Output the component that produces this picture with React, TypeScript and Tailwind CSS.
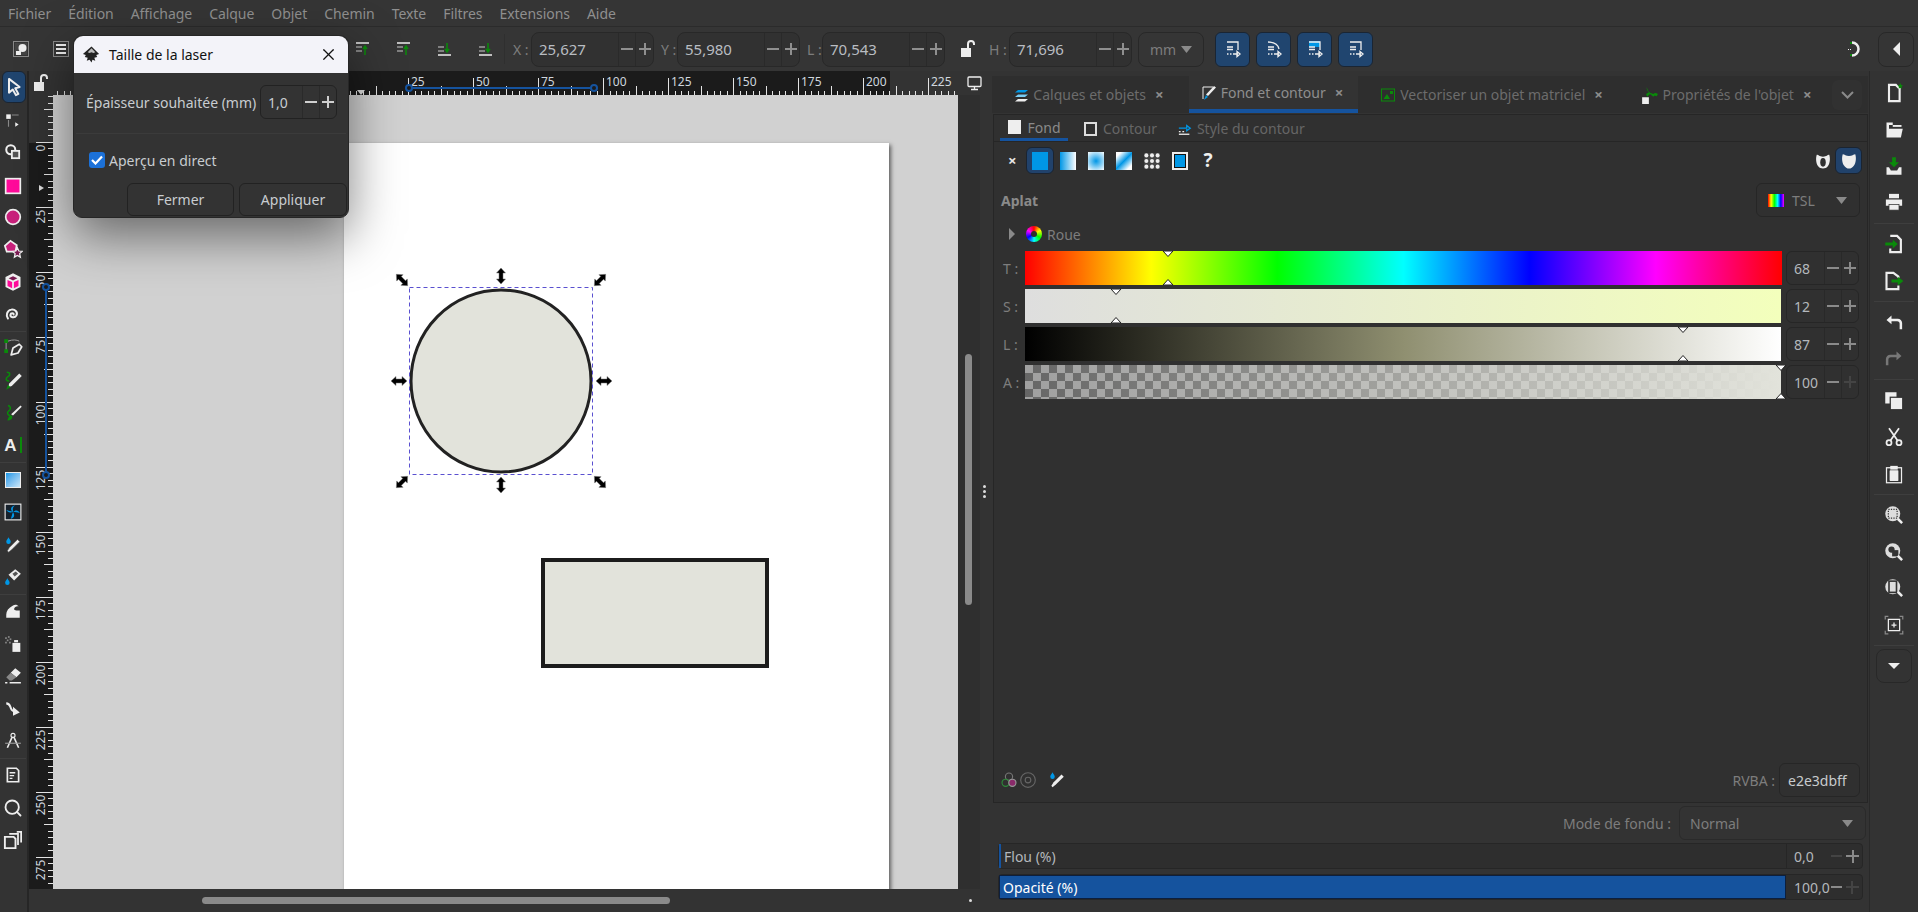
import React from 'react';
import { Search, X } from 'lucide-react';

const W = '#eeeeee';
const G = '#0a8a0a';
const B = '#0097e6';
const P = '#c8217b';

type IconProps = { children: React.ReactNode; size?: number; box?: number };

function Ic({ children, size = 18, box = 16 }: IconProps) {
  return (
    <svg width={size} height={size} viewBox={`0 0 ${box} ${box}`} fill="none">
      {children}
    </svg>
  );
}

// ---- toolbox drawings
const ToolIcons: { node: React.ReactNode; h?: 'sep' }[] = [
  { node: <Ic size={20}><path d="M4 1.500 12.500 8 9 9l2.500 4.500-2 1L7 10l-3 2.500z" stroke={W} strokeWidth="1.600" strokeLinejoin="round" fill="#20456f" /></Ic> },
  { node: <Ic size={18}><rect x="2" y="3" width="4" height="4" fill={W} /><path d="M7 3.500h6M4 8v6" stroke="#888" /><path d="m10 10 3 2-3 2z" fill={W} /></Ic> },
  { node: <Ic size={18}><circle cx="6" cy="6" r="4" stroke={W} strokeWidth="1.800" /><rect x="7" y="7" width="6.500" height="6.500" stroke={W} strokeWidth="1.600" fill="#555" /></Ic> },
  { node: <div className="pt-[3px]"><Ic size={18}><rect x="1.500" y="1.500" width="13" height="13" fill="#ff0a9a" stroke={W} strokeWidth="1.500" /></Ic></div> },
  { node: <Ic size={18}><circle cx="8" cy="8" r="6.500" fill={P} stroke={W} strokeWidth="1.500" /></Ic> },
  { node: <Ic size={20}><path d="M6 1.500 11 5l-1 5H3L1.500 5.500z" fill={P} stroke={W} strokeWidth="1.400" /><path d="m11.500 7 1.200 2.600 2.600.3-2 1.800.6 2.800-2.400-1.400-2.400 1.400.6-2.800-2-1.800 2.600-.3z" fill="#7a1a52" stroke={W} /></Ic> },
  { node: <Ic size={20}><path d="M8 1 14 4v8l-6 3-6-3V4z" fill={W} /><path d="M4.500 5 8 3.300 11.500 5 8 6.800z" fill="#7a1a52" /><path d="M3.600 6.300 7.300 8v5L3.600 11.200zM12.400 6.300 8.700 8v5l3.700-1.800z" fill="#ff0a9a" /></Ic> },
  { node: <Ic size={18}><path d="M8.500 8.500c.5-1.500-2.500-1.800-2.800.2-.3 2.200 3.600 3.400 5.300.6 1.700-3-1.600-6-4.600-5.200C2.500 5 1.500 9.500 3.500 12" stroke={W} strokeWidth="1.800" strokeLinecap="round" /></Ic> },
  { node: null, h: 'sep' },
  { node: <Ic size={20}><rect x="1" y="1" width="3" height="3" fill={G} /><rect x="1" y="9" width="3" height="3" fill={G} /><path d="M2.500 4v5M4 2.500c4-1.500 7-1 9 0" stroke="#999" strokeWidth=".8" /><path d="m13 5-5 3-1.500 5.500 5.500-1.500 3-5z" stroke={W} strokeWidth="1.400" strokeLinejoin="round" /></Ic> },
  { node: <Ic size={20}><path d="M3 1c3 0 3 2.500 1 3.500S2 8 5 8" stroke={G} strokeWidth="1.300" /><path d="m13 2 2 2-8 8-3 1 1-3z" fill={W} /><path d="M4 11 2.500 15 6 13z" fill={G} /></Ic> },
  { node: <Ic size={20}><path d="M4 2c3 1 2 3.500.5 4.500S3.500 10 6 10" stroke={G} strokeWidth="1.200" /><path d="m14 2 1 1-7 7-1.500-1z" fill={W} /><path d="M7 10c-2 0-3 1.500-3.500 4 2.500 0 4-1 4-3z" fill={G} /></Ic> },
  { node: <div className="flex items-center gap-[3px]"><span className="text-[17px] font-bold text-[#eeeeee] leading-none [font-family:'Liberation_Sans',sans-serif]">A</span><span className="w-[2px] h-[16px] bg-[#0a8a0a]" /></div> },
  { node: null, h: 'sep' },
  { node: <div className="w-[16px] h-[16px] border border-[#eeeeee] bg-gradient-to-br from-[#0097e6] to-[#c8e6f8]" /> },
  { node: <Ic size={18}><rect x="1" y="1" width="14" height="14" fill="#16212c" stroke={W} /><path d="M8 8C5 6 6 3 10 2 7 4 8 6 8 8c2-2 5-2 6 1-2-1-4-1-6-1 2 3 1 5-2 6 1-2 1-4 2-6-3 1-5 0-6-2 2 1 4 1 6 2" fill={B} /></Ic> },
  { node: <Ic size={18}><path d="M4 1c1 2 2 2.500 2 4a2 2 0 0 1-4 0c0-1.500 1-2 2-4z" fill={B} /><path d="m12 3 2 2-7 7-3 2.500L3 13l2-3z" fill={W} stroke="#555" strokeWidth=".5" /></Ic> },
  { node: <Ic size={18}><path d="M3 9c1 2 2 2.500 2 4a2 2 0 0 1-4 0c0-1.500 1-2 2-4z" fill={B} /><path d="m10 1 5 4-6 6-5-5z" fill={W} /><path d="m7.500 5 3-2 2 2-3 2.500z" fill="#555" /></Ic> },
  { node: null, h: 'sep' },
  { node: <Ic size={18}><path d="M2 14v-3c0-3 2-6 6-8 2-1 4-.5 5 1-2-.5-3.500.5-4 2-.3 1 1 1.500 2 1.500h3V14z" fill={W} /></Ic> },
  { node: <Ic size={18}><rect x="7.500" y="7" width="7" height="8" fill={W} /><rect x="9" y="4.500" width="3.500" height="2" fill={W} /><g fill="#888"><rect x="1" y="2" width="1.500" height="1.500" /><rect x="3.500" y="1" width="1.500" height="1.500" /><rect x="2.500" y="4" width="1.500" height="1.500" /><rect x="5" y="3" width="1.500" height="1.500" /><rect x="1" y="6" width="1.500" height="1.500" /><rect x="4.500" y="6" width="1.500" height="1.500" /></g></Ic> },
  { node: <Ic size={18}><path d="m10 1 5 4-4 4-5-4z" fill={W} /><path d="M6 5 2 9l3 3h2l4-3z" fill="#888" /><path d="M1 14h2M5 14h10" stroke={W} strokeWidth="1.300" /></Ic> },
  { node: <Ic size={18}><path d="M2 3c3 0 3 1.500 4 4s2 3 3 2.500" stroke={W} strokeWidth="1.800" /><path d="m8 6 6 5-6 3z" fill={W} /></Ic> },
  { node: <Ic size={18}><circle cx="8" cy="3" r="1.800" stroke={W} /><path d="M7 5 3 14M9 5l4 9" stroke={W} strokeWidth="1.400" /><path d="M1 10h14" stroke="#999" /></Ic> },
  { node: null, h: 'sep' },
  { node: <Ic size={18}><path d="M3 2h8l2 2v10H3z" stroke={W} strokeWidth="1.500" /><path d="M5 6h5M5 8.500h4M5 11h2.500" stroke={W} strokeWidth="1.200" /></Ic> },
  { node: <Search size={20} color={W} strokeWidth={2.2} /> },
  { node: <Ic size={20}><path d="M5 3h7v9" stroke={W} strokeWidth="1.400" /><path d="M11 1.500h3.500V10" stroke={W} strokeWidth="1.400" /><path d="M1.500 5.500h7l1.500 1.500v7.500H1.500z" stroke={W} strokeWidth="1.500" /></Ic> },
];

// ---- right-hand command bar
const Cmd = {
  doc: (extra: React.ReactNode) => <Ic size={20}><path d="M4 1.500h5.500L12.500 4.500v10H4z" stroke={W} strokeWidth="1.700" />{extra}</Ic>,
};
const CommandIcons: { node: React.ReactNode; h?: 'sep' }[] = [
  { node: Cmd.doc(<path d="m13 0 .7 1.500L15.200 2l-1.200 1 .4 1.500L13 3.700l-1.400.8.4-1.500-1.200-1 1.500-.5z" fill={G} />) },
  { node: <Ic size={20}><path d="M2 2h5v2h-3v10H2z" fill={W} /><path d="M4 7h11l-1.500 7H4z" fill={W} /><path d="M7 4h7v1.500H7z" fill={W} /></Ic> },
  { node: <Ic size={20}><path d="M2 9h2l1.500 2.500h5L12 9h2v6H2z" fill={W} /><path d="M6.500 1h3v4H12L8 9 4 5h2.500z" fill={G} /></Ic> },
  { node: <Ic size={20}><rect x="4" y="1.500" width="8" height="3.500" fill={W} /><rect x="1.500" y="6" width="13" height="5" fill={W} /><rect x="4" y="10" width="8" height="4.500" fill={W} stroke="#333" strokeWidth=".6" /></Ic> },
  { node: null, h: 'sep' },
  { node: <Ic size={20}><path d="M5 1.500h5.500l3 3v10H5v-3" stroke={W} strokeWidth="1.700" /><path d="M1 6.800h6V4.500L11 8l-4 3.500V9.200H1z" fill={G} /></Ic> },
  { node: <Ic size={20}><path d="M11.500 11.500v3H2v-13h5.500l4 3v1" stroke={W} strokeWidth="1.700" /><path d="M6 6.800h5V4.500L15.500 8 11 11.500V9.200H6z" fill={G} /></Ic> },
  { node: null, h: 'sep' },
  { node: <Ic size={20}><path d="M6 2 2 5.500 6 9V6.500h4.500a2 2 0 0 1 2 2V13h2V8a3.500 3.500 0 0 0-3.500-3.500H6z" fill={W} /></Ic> },
  { node: <Ic size={20}><path d="M10 2l4 3.500L10 9V6.500H5.500a2 2 0 0 0-2 2V13h-2V8A3.500 3.500 0 0 1 5 4.500h5z" fill="#777" /></Ic> },
  { node: null, h: 'sep' },
  { node: <Ic size={20}><rect x="1" y="1" width="9" height="9" fill={W} /><rect x="5" y="5" width="10" height="10" fill={W} stroke="#333" /></Ic> },
  { node: <Ic size={20}><circle cx="4" cy="12.500" r="2" stroke={W} strokeWidth="1.400" /><circle cx="12" cy="12.500" r="2" stroke={W} strokeWidth="1.400" /><path d="M5 11 12 1M11 11 4 1" stroke={W} strokeWidth="1.400" /></Ic> },
  { node: <Ic size={20}><rect x="2" y="3" width="12" height="12" stroke={W} /><rect x="5" y="1.500" width="6" height="3" fill={W} /><rect x="4.500" y="5" width="7" height="8.500" rx=".5" fill={W} /></Ic> },
  { node: null, h: 'sep' },
  { node: <Ic size={20}><circle cx="7" cy="7" r="6" fill="#dddddd" /><rect x="3.500" y="3.500" width="7" height="7" stroke="#333" strokeDasharray="1 1" /><path d="m11 11 3.500 3.500" stroke={W} strokeWidth="2" /></Ic> },
  { node: <Ic size={20}><circle cx="7" cy="7" r="6" fill="#dddddd" /><circle cx="6" cy="6" r="2.500" fill="#333" /><rect x="6.500" y="6.500" width="5" height="5" fill="#333" /><path d="m11 11 3.500 3.500" stroke={W} strokeWidth="2" /></Ic> },
  { node: <Ic size={20}><circle cx="7" cy="7" r="6" fill="#dddddd" /><rect x="4" y="2.500" width="6" height="9" stroke="#333" strokeWidth="1.300" /><path d="m11 11 3.500 3.500" stroke={W} strokeWidth="2" /></Ic> },
  { node: <Ic size={20}><rect x="3.500" y="3.500" width="9" height="9" stroke={W} /><path d="M6 8h4M8 6v4" stroke={W} /><path d="M1 3.500V1h2.500M12.500 1H15v2.500M1 12.500V15h2.500M12.500 15H15v-2.500" stroke="#888" /></Ic> },
  { node: null, h: 'sep' },
];

// ---- rulers
function HRuler() {
  const ticks = Array.from({ length: 140 }, (_, i) => i);
  return (
    <svg width="905" height="24" className="block">
      <rect width="905" height="24" fill="#333333" />
      <rect x="290" width="547" height="24" fill="#1b1b1b" />
      {ticks.map((i) => {
        const x = 290 + (i - 45) * 6.5;
        if (x < 0 || x > 905) return null;
        const k = i - 45;
        const h = k % 10 === 0 ? 17 : k % 5 === 0 ? 9 : 4;
        return <rect key={i} x={Math.round(x)} y={24 - h} width="1" height={h} fill="#e4e4e4" />;
      })}
      {[25, 50, 75, 100, 125, 150, 175, 200, 225].map((n) => (
        <text key={n} x={290 + n * 2.6 + 3} y="15" fontSize="12" fill="#cfd6de">{n}</text>
      ))}
      <path d="m304 19 8 0-4 5z" fill="#dddddd" />
      <path d="M355 17h186" stroke="#15539e" strokeWidth="2" />
      <circle cx="356" cy="17" r="3" fill="#1b1b1b" stroke="#15539e" strokeWidth="2" />
      <circle cx="541" cy="17" r="3" fill="#1b1b1b" stroke="#15539e" strokeWidth="2" />
    </svg>
  );
}

function VRuler() {
  const ticks = Array.from({ length: 130 }, (_, i) => i);
  return (
    <svg width="24" height="794" className="block">
      <rect width="24" height="794" fill="#333333" />
      <rect y="48" width="24" height="746" fill="#1b1b1b" />
      {ticks.map((i) => {
        const y = 46.7 + (i - 8) * 6.5;
        const k = i - 8;
        const h = k % 10 === 0 ? 17 : k % 5 === 0 ? 9 : 5;
        if (y < 0 || y > 793) return null;
        return <rect key={i} x={24 - h} y={Math.round(y)} width={h} height="1" fill="#e4e4e4" />;
      })}
      {[0, 25, 50, 75, 100, 125, 150, 175, 200, 225, 250, 275].map((n) => {
        const y = 46.7 + n * 2.6 + 3;
        return (
          <text key={n} transform={`translate(16 ${y}) rotate(-90)`} textAnchor="end" fontSize="12" fill="#cfd6de">{n}</text>
        );
      })}
      <path d="m10 96 0-6 5 3z" fill="#dddddd" />
      <path d="M17 192v188" stroke="#15539e" strokeWidth="2" />
      <circle cx="17" cy="192" r="3" fill="#1b1b1b" stroke="#15539e" strokeWidth="2" />
      <circle cx="17" cy="380" r="3" fill="#1b1b1b" stroke="#15539e" strokeWidth="2" />
    </svg>
  );
}

// ---- drawing on the canvas, coordinates are canvas-local
function Drawing() {
  const handles: [number, number, number][] = [
    [448, 181, 90], [448, 390, 90], [346, 286, 0], [551, 286, 0],
    [349, 185, 45], [547, 185, -45], [349, 387, -45], [547, 387, 45],
  ];
  return (
    <svg width="905" height="794" className="absolute inset-0">
      <ellipse cx="448" cy="286" rx="90" ry="91" fill="#e2e3db" stroke="#222222" strokeWidth="3" />
      <rect x="356.5" y="192.5" width="183" height="187" fill="none" stroke="#5a50d0" strokeDasharray="4 3" />
      <rect x="490" y="465" width="224" height="106" fill="#e2e3db" stroke="#1c1c1c" strokeWidth="4" />
      {handles.map(([x, y, r], i) => (
        <path
          key={i}
          transform={`translate(${x} ${y}) rotate(${r})`}
          d="M-8 0-3-4.500V-2H3V-4.500L8 0 3 4.500V2H-3V4.500z"
          fill="#000000"
          stroke="#777777"
          strokeWidth=".5"
        />
      ))}
    </svg>
  );
}

function Spin({ value, minus = '#8a8a8a', plus = '#8a8a8a' }: { value: string; minus?: string; plus?: string }) {
  return (
    <div className="w-[73px] h-[34px] flex items-center rounded-[6px] border border-[#262626] text-[14px] text-[#b4b8bc]">
      <span className="flex-1 pl-[7px]">{value}</span>
      <span className="w-[17px] h-full border-l border-[#292929] flex items-center justify-center">
        <span className="w-[12px] h-[2px]" style={{ background: minus }} />
      </span>
      <span className="w-[17px] h-full border-l border-[#292929] relative flex items-center justify-center">
        <span className="w-[12px] h-[2px]" style={{ background: plus }} />
        <span className="absolute w-[2px] h-[12px]" style={{ background: plus }} />
      </span>
    </div>
  );
}

function TopField({ label, value, labelW }: { label: string; value: string; labelW: string }) {
  return (
    <div className="flex items-center">
      <span className={`${labelW} text-[14px] text-[#7d7d7d]`}>{label}</span>
      <div className="w-[123px] h-[35px] flex items-center rounded-[8px] border border-[#282828] bg-[#313131] text-[15px] text-[#b9bdc2]">
        <span className="flex-1 pl-[7px]">{value}</span>
        <span className="w-[17px] h-full border-l border-[#2a2a2a] flex items-center justify-center">
          <span className="w-[12px] h-[2px] bg-[#8f8f8f]" />
        </span>
        <span className="w-[18px] h-full border-l border-[#2a2a2a] relative flex items-center justify-center">
          <span className="w-[12px] h-[2px] bg-[#8f8f8f]" />
          <span className="absolute w-[2px] h-[12px] bg-[#8f8f8f]" />
        </span>
      </div>
    </div>
  );
}

function Marker({ pct }: { pct: number }) {
  return (
    <>
      <svg width="12" height="7" className="absolute top-0 -ml-[6px]" style={{ left: `${pct}%` }}>
        <path d="M1 0 6 5.500 11 0z" fill="#ffffff" stroke="#222222" />
      </svg>
      <svg width="12" height="7" className="absolute bottom-0 -ml-[6px]" style={{ left: `${pct}%` }}>
        <path d="M1 7 6 1.500 11 7z" fill="#ffffff" stroke="#222222" />
      </svg>
    </>
  );
}

const channels = [
  { label: 'T :', value: '68', pct: 68 / 3.6, w: 'w-[757px]', bg: 'bg-[linear-gradient(to_right,#ff0000,#ffff00,#00ff00,#00ffff,#0000ff,#ff00ff,#ff0000)]' },
  { label: 'S :', value: '12', pct: 12, w: 'w-[756px]', bg: 'bg-[linear-gradient(to_right,#dedede,#f3ffbc)]' },
  { label: 'L :', value: '87', pct: 87, w: 'w-[756px]', bg: 'bg-[linear-gradient(to_right,#000000,#8f8f70,#ffffff)]' },
  { label: 'A :', value: '100', pct: 100, w: 'w-[756px]', bg: "bg-[linear-gradient(to_right,transparent,#e2e3db),repeating-conic-gradient(#666666_0_25%,#a0a0a0_0_50%)] [background-size:100%_100%,16px_16px]" },
];

function Tab({ icon, text, width, active, extra }: { icon: React.ReactNode; text: string; width: string; active?: boolean; extra?: string }) {
  return (
    <div className={`${width} h-full flex items-center justify-center gap-[4px] ${extra ?? ''} ${active ? 'bg-[#333333] border-b-[4px] border-[#15539e] text-[#8e8e8e]' : 'text-[#6c6c6c]'} text-[14px]`}>
      {icon}
      <span>{text}</span>
      <span className="ml-[5px] text-[15px] font-bold text-[#8c8c8c] leading-none">×</span>
    </div>
  );
}

function PaintBtn({ children, active }: { children: React.ReactNode; active?: boolean }) {
  return (
    <div className={`w-[28px] h-[27px] flex items-center justify-center rounded-[6px] ${active ? 'bg-[#21426b] border border-[#1b2430]' : ''}`}>
      {children}
    </div>
  );
}

export default function App() {
  const menus = ['Fichier', 'Édition', 'Affichage', 'Calque', 'Objet', 'Chemin', 'Texte', 'Filtres', 'Extensions', 'Aide'];

  return (
    <div className="relative w-[1918px] h-[912px] overflow-hidden bg-[#333333] [font-family:'Noto_Sans',sans-serif] flex flex-col">
      {/* Menu */}
      <div className="h-[27px] flex items-center gap-[17px] pl-[8px] text-[14px] tracking-[-0.05px] text-[#8f8f8f] border-b border-[#2b2b2b] bg-[#353535]">
        {menus.map((m) => <span key={m}>{m}</span>)}
      </div>

      {/* Top toolbar */}
      <div className="h-[44px] flex items-center bg-[#353535] relative">
        <div className="w-[29px] flex justify-end">
          <Ic size={16}><rect x=".5" y=".5" width="15" height="15" stroke="#ddd" strokeDasharray="1 1" /><rect x="2" y="2" width="12" height="12" fill="#444" /><circle cx="9.5" cy="7" r="4" fill={W} /><rect x="3" y="10" width="5" height="4" fill={W} /></Ic>
        </div>
        <div className="ml-[24px]">
          <Ic size={16}><rect x=".5" y=".5" width="15" height="15" stroke="#ddd" strokeDasharray="1 1" /><path d="M3 4h10M3 8h10M3 12h10" stroke={W} strokeWidth="2" /></Ic>
        </div>
        <div className="ml-[286px] flex items-center gap-[26px]">
          {[0, 1, 2, 3].map((i) => (
            <svg key={i} width="15" height="16" viewBox="0 0 15 16" fill="none">
              <path d={i < 2 ? 'M1 2h13' : 'M1 14h13'} stroke={W} strokeWidth="1.500" />
              <path d="M1 6h6M1 10h6" stroke="#999" strokeWidth="1.500" />
              <path d={i < 2 ? 'M10 14V6M8 8l2-3 2 3' : 'M10 2v8M8 8l2 3 2-3'} stroke={G} strokeWidth="1.500" />
            </svg>
          ))}
        </div>
        <div className="w-px h-[30px] bg-[#2f2f2f] ml-[11px]" />
        <div className="ml-[8px] flex items-center gap-[7px]">
          <TopField label="X :" value="25,627" labelW="w-[18px]" />
          <TopField label="Y :" value="55,980" labelW="w-[16px]" />
          <TopField label="L :" value="70,543" labelW="w-[15px]" />
        </div>
        <svg width="16" height="18" viewBox="0 0 16 18" className="ml-[15px]" fill="none">
          <rect x="1" y="8" width="10" height="9" fill={W} />
          <path d="M8 8V4a3 3 0 0 1 6 0v1" stroke={W} strokeWidth="2" />
        </svg>
        <div className="ml-[13px] flex items-center">
          <TopField label="H :" value="71,696" labelW="w-[20px]" />
        </div>
        <div className="ml-[6px] w-[66px] h-[35px] rounded-[8px] border border-[#282828] flex items-center justify-center gap-[5px] text-[14px] text-[#7d7d7d]">
          mm
          <svg width="11" height="7"><path d="M0 0h11L5.500 7z" fill="#8a8a8a" /></svg>
        </div>
        <div className="ml-[11px] flex items-center gap-[6px]">
          {[0, 1, 2, 3].map((i) => (
            <div key={i} className="w-[35px] h-[35px] rounded-[6px] bg-[#20456f] border border-[#1a2533] flex items-center justify-center">
              <svg width="20" height="18" viewBox="0 0 20 18" fill="none">
                {i === 2 ? <rect x="4" y="1" width="11" height="6" fill={B} /> : null}
                <path d={i === 1 ? 'M4 2c6 0 10 2 11 7' : 'M4 2h11v8'} stroke={W} strokeWidth="1.300" />
                <path d="M4 7h6M4 9.500h6" stroke={W} strokeWidth="1.300" />
                <path d="M4 14h1.500M7 14h1.500M10 14h5M14 11.500l3 2.500-3 2.500z" stroke={W} strokeWidth="1.300" />
              </svg>
            </div>
          ))}
        </div>
        <div className="ml-auto flex items-center gap-[15px] pr-[4px]">
          <svg width="16" height="18" viewBox="0 0 16 18" fill="none">
            <path d="M5 2.500a6.500 6.500 0 0 1 0 13" stroke={W} strokeWidth="2.500" />
            <path d="M4 2v2M4 14v2" stroke={G} strokeWidth="2" />
            <path d="M1 9.500h3" stroke={W} strokeDasharray="1 1" />
          </svg>
          <div className="w-[36px] h-[35px] rounded-[8px] border border-[#282828] flex items-center justify-center">
            <svg width="7" height="14"><path d="M7 0v14L0 7z" fill={W} /></svg>
          </div>
        </div>
      </div>

      {/* Main area */}
      <div className="flex-1 flex min-h-0">
        {/* Toolbox */}
        <div className="w-[27px] flex flex-col shrink-0 pr-[1px]">
          {ToolIcons.map((t, i) =>
            t.h === 'sep' ? (
              <div key={i} className="h-[2px] flex items-center"><div className="w-full h-px bg-[#3e3e3e]" /></div>
            ) : (
              <div
                key={i}
                className={`h-[32.4px] flex items-center justify-center ${i === 0 ? 'ml-[2px] rounded-[6px] bg-[#20456f] border border-[#1a2533]' : ''}`}
              >
                {t.node}
              </div>
            )
          )}
        </div>
        <div className="w-[2px] bg-[#262626] shrink-0" />

        {/* Workspace */}
        <div className="w-[961px] flex flex-col shrink-0">
          <div className="flex h-[24px]">
            <div className="w-[24px] flex items-center justify-center bg-[#333333]">
              <svg width="16" height="18" viewBox="0 0 16 18" fill="none">
                <rect x="1" y="8" width="10" height="9" fill={W} />
                <path d="M8 8V4a3 3 0 0 1 6 0v1" stroke={W} strokeWidth="2" />
              </svg>
            </div>
            <HRuler />
            <div className="flex-1 flex items-center justify-center">
              <svg width="15" height="15" viewBox="0 0 15 15" fill="none">
                <rect x="1" y="1" width="13" height="9.500" rx="1" stroke={W} strokeWidth="1.300" />
                <path d="M7.500 11v2M4 13.500h7" stroke={W} strokeWidth="1.300" />
              </svg>
            </div>
          </div>
          <div className="flex h-[794px]">
            <VRuler />
            <div className="relative w-[905px] h-[794px] overflow-hidden bg-[#d1d1d1]">
              <div className="absolute left-[291px] top-[48px] w-[545px] h-[760px] bg-white shadow-[2px_2px_4px_rgba(0,0,0,0.55)]" />
              <Drawing />
            </div>
            <div className="w-[22px] bg-[#2f2f2f] relative">
              <div className="absolute left-[7px] top-[259px] w-[7px] h-[251px] rounded-full bg-[#8a8a8a]" />
            </div>
            <div className="w-[10px] flex flex-col items-center justify-center gap-[2px] pr-[1px] pb-[2px]">
              <span className="w-[3px] h-[3px] rounded-full bg-[#dddddd]" />
              <span className="w-[3px] h-[3px] rounded-full bg-[#dddddd]" />
              <span className="w-[3px] h-[3px] rounded-full bg-[#dddddd]" />
            </div>
          </div>
          <div className="h-[23px] relative">
            <div className="absolute left-[173px] top-[8px] w-[468px] h-[7px] rounded-full bg-[#8a8a8a]" />
            <div className="absolute left-[940px] top-[10px] w-[3px] h-[3px] rounded-full bg-[#dddddd]" />
          </div>
        </div>

        {/* Dock */}
        <div className="w-[879px] shrink-0 flex flex-col pt-[5px] pl-[2px] bg-[#333333]">
          <div className="h-[37px] flex items-center bg-[#2e2e2e] mr-[1px]">
            <Tab
              width="w-[197px]"
              extra="pr-[4px]"
              text="Calques et objets"
              icon={<Ic size={16}><path d="M5 3h10l-3 2.500H2z" fill={B} /><path d="M5 7.500h10l-3 2.500H2z" fill="#79cdf5" /><path d="M5 12h10l-3 2.500H2z" fill={W} /></Ic>}
            />
            <Tab
              active
              width="w-[169px]"
              extra="pr-[3px]"
              text="Fond et contour"
              icon={<Ic size={16}><path d="M2 14V2h10" stroke={W} /><path d="m13 1 2 1.500L7 11 5 9.500z" fill={W} /><path d="M5 10 3 15l4-3z" fill={B} /></Ic>}
            />
            <Tab
              width="w-[267px]"
              text="Vectoriser un objet matriciel"
              icon={<Ic size={16}><rect x="1.500" y="2" width="13" height="12" stroke={G} /><path d="M3.500 12 7 7l3 5z" fill={G} /><rect x="10" y="4" width="3" height="3" fill={G} /></Ic>}
            />
            <Tab
              width="w-[207px]"
              extra="pr-[5px]"
              text="Propriétés de l'objet"
              icon={<Ic size={18}><rect x="1" y="10" width="6" height="6" fill={W} /><path d="M5 1c1 2 1 3.500 3 5l3 1c1-1 2.500-1 4 0l-1 2-2-.500-1 1-3-2.500-2.500 2.500L4.500 7 7 5.500C5.500 4 5 3 5 1z" fill={G} /></Ic>}
            />
            <div className="w-[30px] h-[30px] rounded-[6px] bg-[#313131] flex items-center justify-center">
              <svg width="13" height="8" fill="none"><path d="m1 1 5.500 5.500L12 1" stroke="#8a8a8a" strokeWidth="2" /></svg>
            </div>
          </div>

          {/* Fill & stroke */}
          <div className="h-[689px] w-[875px] ml-[1px] mt-[1px] border border-[#262626] bg-[#303030] flex flex-col">
            <div className="h-[27px] flex items-end gap-[16px] border-b-[1px] border-[#262626] text-[14px] shrink-0 pl-[6px]">
              <div className="h-full w-[68px] flex items-center justify-center gap-[7px] border-b-[3px] border-[#15539e] text-[#8a8a8a] pt-[1px]">
                <span className="w-[13px] h-[14px] bg-[#eeeeee]" />Fond
              </div>
              <div className="h-full flex items-center gap-[6px] text-[#666666] pt-[1px]">
                <span className="w-[13px] h-[14px] border-2 border-[#dddddd]" />Contour
              </div>
              <div className="h-full flex items-center gap-[5px] text-[#666666] ml-[5px] pt-[1px]">
                <Ic size={14}><path d="M1 7h9V4l4 3-4 3V8" stroke={B} strokeWidth="1.500" /><path d="M1 11h2M5 11h2" stroke={W} strokeWidth="1.500" /><path d="M1 14h12" stroke={W} strokeWidth="1.500" /></Ic>
                Style du contour
              </div>
            </div>

            <div className="h-[31px] flex items-center pl-[14px] pr-[5px] mt-[3px] shrink-0">
              <span className="text-[15px] font-bold text-[#e6e6e6] w-[18px] leading-none">×</span>
              <PaintBtn active><span className="w-[16px] h-[18px] bg-[#0097e6]" /></PaintBtn>
              <PaintBtn><span className="w-[16px] h-[18px] bg-[linear-gradient(to_right,#0097e6,#ffffff)]" /></PaintBtn>
              <PaintBtn><span className="w-[16px] h-[18px] bg-[radial-gradient(circle,#0097e6,#ffffff)]" /></PaintBtn>
              <PaintBtn><span className="w-[16px] h-[18px] bg-[linear-gradient(135deg,#ffffff_15%,#0097e6_50%,#ffffff_85%)]" /></PaintBtn>
              <PaintBtn>
                <Ic size={18}><path d="M1 1h14v14H1z" fill="#444" /><g fill={W}><circle cx="3" cy="3" r="1.800" /><circle cx="8" cy="3" r="1.800" /><circle cx="13" cy="3" r="1.800" /><circle cx="3" cy="8" r="1.800" /><circle cx="8" cy="8" r="1.800" /><circle cx="13" cy="8" r="1.800" /><circle cx="3" cy="13" r="1.800" /><circle cx="8" cy="13" r="1.800" /><circle cx="13" cy="13" r="1.800" /></g></Ic>
              </PaintBtn>
              <PaintBtn><span className="w-[16px] h-[18px] border-2 border-[#eeeeee] bg-[#111111] flex items-center justify-center"><span className="w-[10px] h-[12px] bg-[#0097e6]" /></span></PaintBtn>
              <PaintBtn><span className="text-[19px] font-bold text-[#eeeeee] leading-none">?</span></PaintBtn>
              <div className="ml-auto flex items-center gap-[2px]">
                <Ic size={20}><path d="M3 3c1.500 0 2 1.500 5 1.500S11.500 3 13 3c1 3 .5 7-1 9-1 1.500-2.500 2-4 2s-3-.5-4-2c-1.500-2-2-6-1-9z" fill={W} /><ellipse cx="8" cy="9" rx="2.200" ry="3.500" fill="#303030" /></Ic>
                <div className="w-[27px] h-[27px] rounded-[6px] bg-[#21426b] border border-[#1b2430] flex items-center justify-center">
                  <Ic size={20}><path d="M3 2.500c1.500 0 2.500 1.500 5 1.500s3.500-1.500 5-1.500c1 3 .5 7-1 9-1 1.500-2.500 2.500-4 2.500s-3-1-4-2.500c-1.500-2-2-6-1-9z" fill={W} /></Ic>
                </div>
              </div>
            </div>

            <div className="flex items-center justify-between h-[34px] mt-[7px] pl-[7px] pr-[7px] shrink-0">
              <span className="text-[14px] font-bold text-[#8a8a8a]">Aplat</span>
              <div className="w-[104px] h-[34px] rounded-[6px] border border-[#262626] flex items-center pl-[11px] text-[14px] text-[#7d7d7d]">
                <span className="w-[16px] h-[13px] mr-[8px] bg-[linear-gradient(to_right,#ff0000,#ffff00,#00ff00,#00ffff,#0000ff,#ff00ff)]" />
                TSL
                <svg width="11" height="7" className="ml-auto mr-[12px]"><path d="M0 0h11L5.500 7z" fill="#8a8a8a" /></svg>
              </div>
            </div>

            <div className="h-[34px] flex items-center pl-[15px] text-[14px] text-[#7d7d7d] shrink-0">
              <svg width="6" height="12" className="mr-[11px]"><path d="M0 0v12l6-6z" fill="#8a8a8a" /></svg>
              <span className="w-[16px] h-[16px] rounded-full mr-[5px] bg-[conic-gradient(#ff0000,#ffff00,#00ff00,#00ffff,#0000ff,#ff00ff,#ff0000)] flex items-center justify-center">
                <span className="w-[6px] h-[6px] rounded-full bg-[#303030]" />
              </span>
              Roue
            </div>

            <div className="flex flex-col gap-[4px] shrink-0">
              {channels.map((c) => (
                <div key={c.label} className="flex items-center h-[34px]">
                  <span className="w-[31px] pl-[9px] text-[14px] text-[#7d7d7d]">{c.label}</span>
                  <div className={`relative h-[34px] ${c.w} ${c.bg}`}>
                    <Marker pct={c.pct} />
                  </div>
                  <div className={c.label === 'T :' ? 'ml-[4px]' : 'ml-[5px]'}>
                    <Spin value={c.value} plus={c.label === 'A :' ? '#444444' : '#8a8a8a'} />
                  </div>
                </div>
              ))}
            </div>

            <div className="mt-auto mb-[5px] h-[34px] flex items-center pl-[6px] pr-[7px] shrink-0">
              <Ic size={18}><circle cx="8" cy="5" r="3.200" stroke="#777" /><circle cx="5" cy="10.500" r="3.200" stroke="#2f8a3a" /><circle cx="11" cy="10.500" r="3.200" fill="#8a2a6a" stroke="#999" /></Ic>
              <span className="ml-[1px]"><Ic size={18}><circle cx="8" cy="8" r="6.500" stroke="#666" /><circle cx="8" cy="8" r="2.500" stroke="#666" /></Ic></span>
              <span className="ml-[11px]"><Ic size={18}><path d="M4 1c1 2 2 2.500 2 4a2 2 0 0 1-4 0c0-1.500 1-2 2-4z" fill={B} /><path d="m12 3 2 2-7 7-3 2.500L3 13l2-3z" fill={W} /></Ic></span>
              <span className="ml-auto text-[14px] text-[#7d7d7d]">RVBA :</span>
              <div className="ml-[4px] w-[81px] h-[34px] rounded-[6px] border border-[#262626] flex items-center pl-[8px] text-[14px] text-[#c8cbce]">
                e2e3dbff
              </div>
            </div>
          </div>

          {/* Blend, blur, opacity */}
          <div className="h-[34px] flex items-center justify-end pr-[3px] mt-[3px] text-[14px] text-[#7d7d7d]">
            <span className="mr-[8px]">Mode de fondu :</span>
            <div className="w-[187px] h-[34px] rounded-[6px] border border-[#2a2a2a] flex items-center pl-[10px]">
              Normal
              <svg width="11" height="7" className="ml-auto mr-[12px]"><path d="M0 0h11L5.500 7z" fill="#8a8a8a" /></svg>
            </div>
          </div>
          <div className="mt-[3px] ml-[6px] w-[865px] h-[26px] flex border border-[#262626] rounded-[4px] bg-[#2e2e2e] text-[14px]">
            <div className="w-[787px] flex items-center pl-[3px] border-l-2 border-[#15539e] text-[#b4b8bc]">Flou (%)</div>
            <div className="flex-1 flex items-center border-l border-[#262626] pl-[7px] text-[#b4b8bc]">
              0,0
              <span className="ml-auto w-[11px] h-[2px] bg-[#444444]" />
              <span className="relative ml-[4px] mr-[3px] w-[13px] h-[2px] bg-[#8a8a8a]">
                <span className="absolute left-[5.500px] -top-[5.500px] w-[2px] h-[13px] bg-[#8a8a8a]" />
              </span>
            </div>
          </div>
          <div className="mt-[5px] ml-[6px] w-[865px] h-[26px] flex border border-[#262626] rounded-[4px] bg-[#2e2e2e] text-[14px]">
            <div className="w-[787px] flex items-center pl-[3px] bg-[#15539e] border border-[#0d1f3d] text-[#ffffff]">Opacité (%)</div>
            <div className="flex-1 flex items-center pl-[8px] text-[#b4b8bc]">
              100,0
              <span className="ml-[1px] w-[11px] h-[2px] bg-[#8a8a8a]" />
              <span className="relative ml-[4px] mr-[3px] w-[13px] h-[2px] bg-[#444444]">
                <span className="absolute left-[5.500px] -top-[5.500px] w-[2px] h-[13px] bg-[#444444]" />
              </span>
            </div>
          </div>
        </div>

        {/* Command bar */}
        <div className="flex-1 border-l border-[#292929] flex flex-col items-center pt-[4px]">
          {CommandIcons.map((c, i) =>
            c.h === 'sep' ? (
              <div key={i} className="h-[5.5px] w-[40px] flex items-center"><div className="w-full h-px bg-[#3e3e3e]" /></div>
            ) : (
              <div key={i} className="h-[36.4px] flex items-center justify-center">{c.node}</div>
            )
          )}
          <div className="mt-[1px] w-[36px] h-[34px] rounded-[8px] border border-[#282828] flex items-center justify-center">
            <svg width="12" height="6"><path d="M0 0h12L6 6z" fill={W} /></svg>
          </div>
        </div>
      </div>

      {/* Floating extension dialog */}
      <div className="absolute left-[73px] top-[35px] w-[276px] h-[183px] rounded-[9px] bg-[#333333] border border-[#262626] shadow-[0_18px_50px_rgba(0,0,0,0.5)] flex flex-col text-[14px] text-[#c8ccd0]">
        <div className="h-[37px] rounded-t-[9px] bg-[#f3f3f9] flex items-center pl-[8px] pr-[10px] text-[#111111] shrink-0">
          <svg width="19" height="20" viewBox="0 0 20 20" className="mr-[8px]">
            <path d="M10 1 18 9l-3 1 1 2-3 1 1 3-3-1-1 3-2-3-3 1 1-3-3-1 1-2-3-1z" fill="#222222" />
            <path d="M10 3 14 7l-2 1-2-1-2 1-2-1z" fill="#bbbbbb" />
          </svg>
          Taille de la laser
          <X size={19} strokeWidth={1.5} className="ml-auto text-[#111111]" />
        </div>
        <div className="flex items-center h-[34px] mt-[12px] pl-[12px] shrink-0">
          <span className="w-[174px]">Épaisseur souhaitée (mm)</span>
          <div className="w-[77px] h-[34px] rounded-[6px] border border-[#222222] flex items-center">
            <span className="flex-1 pl-[7px]">1,0</span>
            <span className="w-[17px] h-full border-l border-[#2a2a2a] flex items-center justify-center"><span className="w-[12px] h-[2px] bg-[#d0d0d0]" /></span>
            <span className="w-[17px] h-full border-l border-[#2a2a2a] relative flex items-center justify-center">
              <span className="w-[12px] h-[2px] bg-[#d0d0d0]" />
              <span className="absolute w-[2px] h-[12px] bg-[#d0d0d0]" />
            </span>
          </div>
        </div>
        <div className="h-px bg-[#3b3b3b] mt-[14px] mx-[2px] shrink-0" />
        <div className="flex items-center mt-[16px] pl-[15px] h-[20px] shrink-0">
          <span className="w-[16px] h-[16px] rounded-[3px] bg-[#1c71d8] flex items-center justify-center mr-[4px]">
            <svg width="12" height="10" fill="none"><path d="m1 5 3.500 3.500L11 1.500" stroke="#ffffff" strokeWidth="2.200" /></svg>
          </span>
          Aperçu en direct
        </div>
        <div className="flex justify-end gap-[5px] pr-[1px] mt-[13px]">
          <div className="w-[107px] h-[33px] rounded-[6px] border border-[#222222] flex items-center justify-center">Fermer</div>
          <div className="w-[108px] h-[33px] rounded-[6px] border border-[#222222] flex items-center justify-center">Appliquer</div>
        </div>
      </div>
    </div>
  );
}
